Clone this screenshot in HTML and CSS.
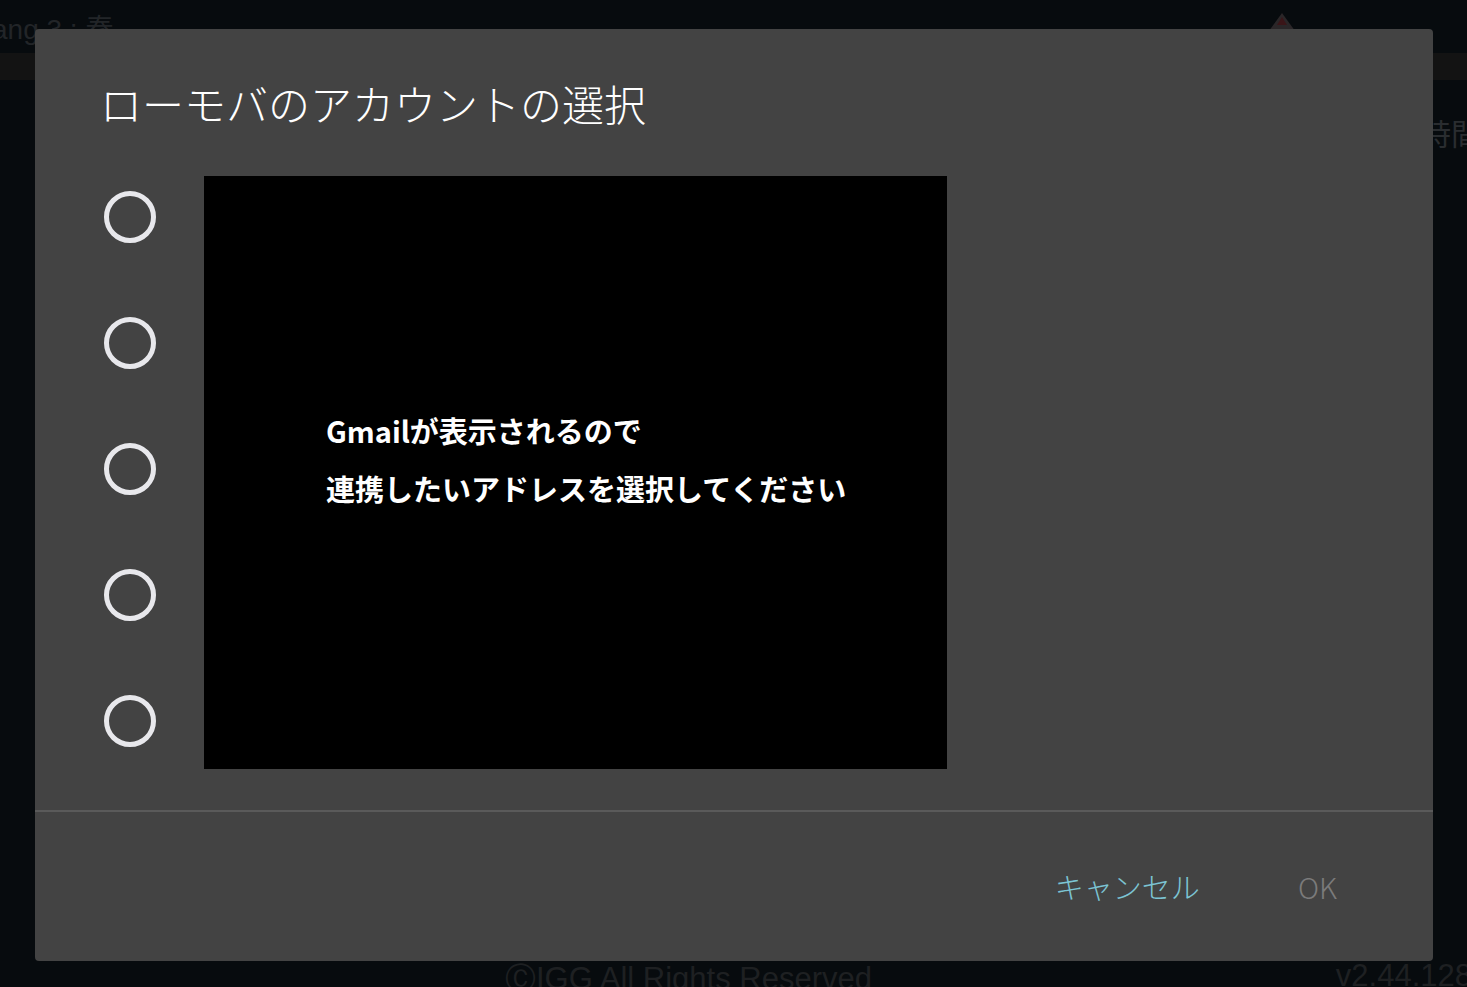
FILE: index.html
```html
<!DOCTYPE html>
<html lang="ja">
<head>
    <meta charset="UTF-8">
    <title>ローモバのアカウントの選択</title>
    <link rel="stylesheet" href="styles.css">
</head>
<body>
    <div class="backdrop">
        <div class="top-bar">
            <span class="player-name">ang 3 : 秦</span>
            <svg class="top-icon" width="40" height="24" viewBox="0 0 40 24">
                <polygon points="20,2 36,24 4,24" fill="#2a2628"/>
                <polygon points="20,6 25,14 15,14" fill="#3a1518"/>
            </svg>
        </div>
        <div class="band"></div>
        <div class="side-text">時間</div>
        <div class="footer-text">
            <span>ⒸIGG All Rights Reserved</span>
            <span class="version">v2.44.128</span>
        </div>
    </div>

    <div class="dialog">
        <div class="dialog-title">ローモバのアカウントの選択</div>
        <div class="dialog-body">
            <div class="radio-list">
                <span class="radio"></span>
                <span class="radio"></span>
                <span class="radio"></span>
                <span class="radio"></span>
                <span class="radio"></span>
            </div>
            <div class="hidden-box">
                <p>Gmailが表示されるので</p>
                <p>連携したいアドレスを選択してください</p>
            </div>
        </div>
        <div class="dialog-actions">
            <button class="btn cancel">キャンセル</button>
            <button class="btn ok">OK</button>
        </div>
    </div>
</body>
</html>
```

FILE: styles.css
```css
body {
    margin: 0;
    background-color: #070b0e;
    font-family: "Noto Sans CJK JP", "Noto Sans", sans-serif;
    width: 1467px;
    height: 987px;
    overflow: hidden;
}

/* faint game screen behind the dialog */
.backdrop {
    position: relative;
    height: 987px;
    color: #26292c;
}
.top-bar {
    height: 53px;
    display: flex;
    align-items: center;
    justify-content: space-between;
    padding: 0 165px 0 0;
}
.player-name {
    font-family: "Liberation Sans", "Noto Sans CJK JP", sans-serif;
    font-size: 28px;
    margin-left: -8px;
    color: #222528;
}
.top-icon {
    margin-top: -8px;
}
.band {
    height: 27px;
    background-color: #131313;
}
.side-text {
    text-align: right;
    font-size: 30px;
    margin-top: 30px;
    margin-right: -14px;
    color: #2a2d30;
}
.footer-text {
    position: absolute;
    bottom: -13px;
    left: 505px;
    right: -5px;
    display: flex;
    justify-content: space-between;
    font-family: "Liberation Sans", sans-serif;
    font-size: 31px;
    color: #1e2022;
}

.dialog {
    position: absolute;
    left: 35px;
    top: 29px;
    width: 1398px;
    height: 932px;
    background-color: #434343;
    border-radius: 4px;
    display: flex;
    flex-direction: column;
}
.dialog-title {
    font-size: 42px;
    line-height: 42px;
    font-weight: 300;
    color: #ffffff;
    padding: 53px 0 0 65px;
}
.dialog-body {
    display: flex;
    padding: 52px 0 0 69px;
    height: 593px;
}
.radio-list {
    display: flex;
    flex-direction: column;
    gap: 74px;
    padding-top: 15px;
    width: 100px;
}
.radio {
    width: 42px;
    height: 42px;
    border: 5px solid #e8e8ec;
    border-radius: 50%;
}
.hidden-box {
    width: 743px;
    height: 593px;
    background-color: #000;
    display: flex;
    flex-direction: column;
    justify-content: center;
    padding-left: 122px;
    box-sizing: border-box;
    padding-bottom: 28px;
}
.hidden-box p {
    margin: 0;
    color: #fff;
    font-size: 29px;
    font-weight: bold;
    line-height: 58px;
}
.dialog-actions {
    margin-top: 41px;
    border-top: 2px solid #5a5a5a;
    flex: 1;
    display: flex;
    justify-content: flex-end;
    align-items: center;
    padding-right: 96px;
    gap: 98px;
    padding-bottom: 2px;
}
.btn {
    background: none;
    border: none;
    padding: 0;
    font-family: "Noto Sans CJK JP", sans-serif;
    font-size: 29px;
    font-weight: 300;
}
.cancel {
    color: #7cc4d3;
}
.ok {
    color: #7b7b7b;
}
```
